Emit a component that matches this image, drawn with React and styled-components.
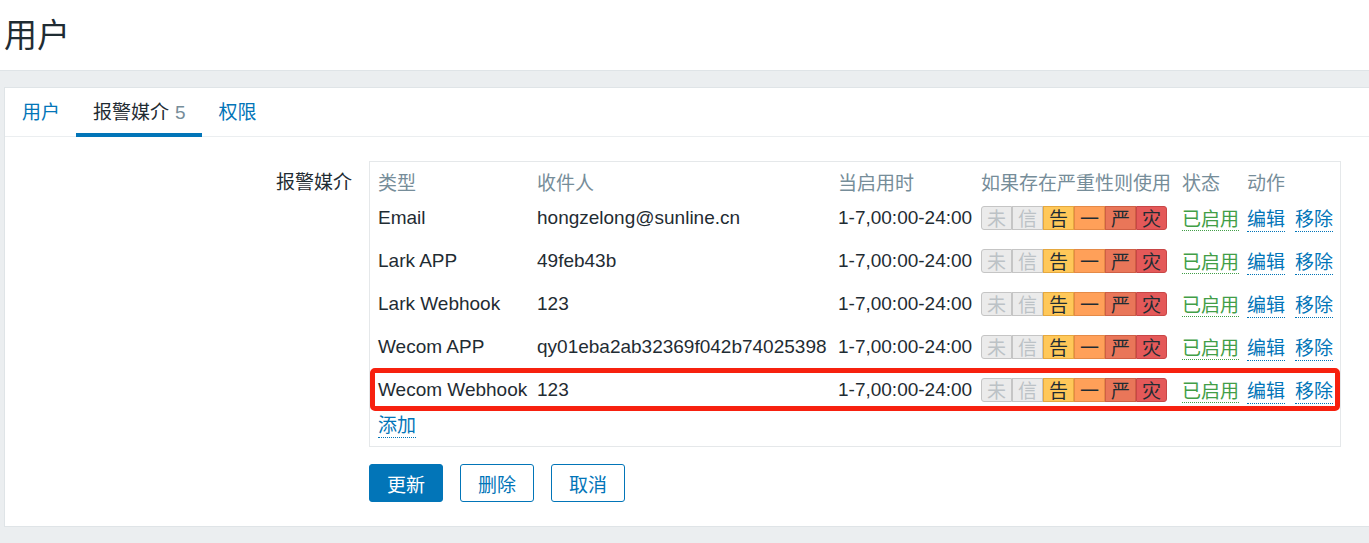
import styled, { createGlobalStyle } from 'styled-components';

const GlobalStyle = createGlobalStyle`
  html, body {
    margin: 0;
    padding: 0;
    background: #ebeef0;
    font-family: "Liberation Sans", Arial, "Noto Sans CJK SC", sans-serif;
    color: #1f2c33;
    font-size: 19px;
  }
`;

const media = [
  { type: 'Email', to: 'hongzelong@sunline.cn' },
  { type: 'Lark APP', to: '49feb43b' },
  { type: 'Lark Webhook', to: '123' },
  { type: 'Wecom APP', to: 'qy01eba2ab32369f042b74025398' },
  { type: 'Wecom Webhook', to: '123', marked: true },
];

const severities = [
  { label: '未', bg: '#ebebeb', border: '#c5c5c5', off: true },
  { label: '信', bg: '#ebebeb', border: '#c5c5c5', off: true },
  { label: '告', bg: '#ffc859', border: '#e5a83f' },
  { label: '一', bg: '#ffa059', border: '#e58a47' },
  { label: '严', bg: '#e97659', border: '#cf5f45' },
  { label: '灾', bg: '#e45959', border: '#c84646' },
];

const Header = styled.header`
  height: 70px;
  background: #fff;
  border-bottom: 1px solid #dfe4e7;
  display: flex;
  align-items: center;
  padding-left: 4px;
`;

const Title = styled.h1`
  margin: 0 0 4px;
  font-size: 33px;
  font-weight: normal;
  color: #1f2c33;
`;

const Main = styled.main`
  padding: 16px 0 17px 4px;
`;

const Panel = styled.section`
  background: #fff;
  border: 1px solid #dfe4e7;
  border-right: none;
  height: 440px;
  box-sizing: border-box;
`;

const Tabs = styled.nav`
  display: flex;
  height: 48px;
  border-bottom: 1px solid #ebeef0;
`;

const Tab = styled.div`
  padding: 6px 16px 0 17px;
  line-height: 38px;
  color: ${({ active }) => (active ? '#1f2c33' : '#0275b8')};
  border-bottom: 4px solid ${({ active }) => (active ? '#0275b8' : 'transparent')};
  margin-bottom: -1px;
`;

const Count = styled.span`
  color: #768d99;
  margin-left: 6px;
`;

const Form = styled.div`
  display: grid;
  grid-template-columns: 347px 972px;
  column-gap: 17px;
  padding-top: 24px;
`;

const Label = styled.div`
  text-align: right;
  padding-top: 6px;
`;

const TableBox = styled.div`
  border: 1px solid #e5e8ea;
  padding-bottom: 10px;
`;

const Row = styled.div`
  position: relative;
  display: grid;
  grid-template-columns: 159px 301px 143px 201px 65px 1fr;
  align-items: center;
  height: ${({ head }) => (head ? '34px' : '43px')};
  padding: 0 8px;
  color: ${({ head }) => (head ? '#768d99' : '#1f2c33')};
  ${({ head }) => head && 'align-items: end; padding-bottom: 1px; box-sizing: border-box;'}
  white-space: nowrap;

  &::after {
    content: '';
    display: ${({ marked }) => (marked ? 'block' : 'none')};
    position: absolute;
    inset: 0;
    border: 5px solid #f7210f;
    border-radius: 5px;
  }
`;

const Severity = styled.div`
  display: flex;
  height: 24px;
`;

const Level = styled.span`
  width: 31px;
  display: flex;
  align-items: center;
  justify-content: center;
  box-sizing: border-box;
  background: ${({ bg }) => bg};
  border: 1px solid ${({ border }) => border};
  color: ${({ off }) => (off ? '#bcc2c6' : '#1f2c33')};
  &:first-child {
    border-radius: 3px 0 0 3px;
  }
  &:last-child {
    border-radius: 0 3px 3px 0;
  }
`;

const Link = styled.a`
  color: ${({ green }) => (green ? '#429e47' : '#0275b8')};
  text-decoration: none;
  border-bottom: 1px dotted currentColor;
  cursor: pointer;
`;

const Actions = styled.div`
  display: flex;
  gap: 10px;
`;

const AddRow = styled.div`
  padding: 0 8px;
  height: 25px;
  display: flex;
  align-items: center;
`;

const Buttons = styled.div`
  grid-column: 2;
  display: flex;
  gap: 17px;
  margin-top: 17px;
`;

const Button = styled.button`
  height: 38px;
  padding: 0 17px;
  font: inherit;
  border-radius: 3px;
  border: 1px solid #0275b8;
  background: ${({ primary }) => (primary ? '#0275b8' : '#fff')};
  color: ${({ primary }) => (primary ? '#fff' : '#0275b8')};
  cursor: pointer;
`;

export default function App() {
  return (
    <>
      <GlobalStyle />
      <Header>
        <Title>用户</Title>
      </Header>
      <Main>
        <Panel>
          <Tabs>
            <Tab>用户</Tab>
            <Tab active>
              报警媒介<Count>5</Count>
            </Tab>
            <Tab>权限</Tab>
          </Tabs>
          <Form>
            <Label>报警媒介</Label>
            <TableBox>
              <Row head>
                <span>类型</span>
                <span>收件人</span>
                <span>当启用时</span>
                <span>如果存在严重性则使用</span>
                <span>状态</span>
                <span>动作</span>
              </Row>
              {media.map((m) => (
                <Row key={m.type} marked={m.marked}>
                  <span>{m.type}</span>
                  <span>{m.to}</span>
                  <span>1-7,00:00-24:00</span>
                  <Severity>
                    {severities.map((s) => (
                      <Level key={s.label} bg={s.bg} border={s.border} off={s.off}>
                        {s.label}
                      </Level>
                    ))}
                  </Severity>
                  <span>
                    <Link green>已启用</Link>
                  </span>
                  <Actions>
                    <Link>编辑</Link>
                    <Link>移除</Link>
                  </Actions>
                </Row>
              ))}
              <AddRow>
                <Link>添加</Link>
              </AddRow>
            </TableBox>
            <Buttons>
              <Button primary>更新</Button>
              <Button>删除</Button>
              <Button>取消</Button>
            </Buttons>
          </Form>
        </Panel>
      </Main>
    </>
  );
}
